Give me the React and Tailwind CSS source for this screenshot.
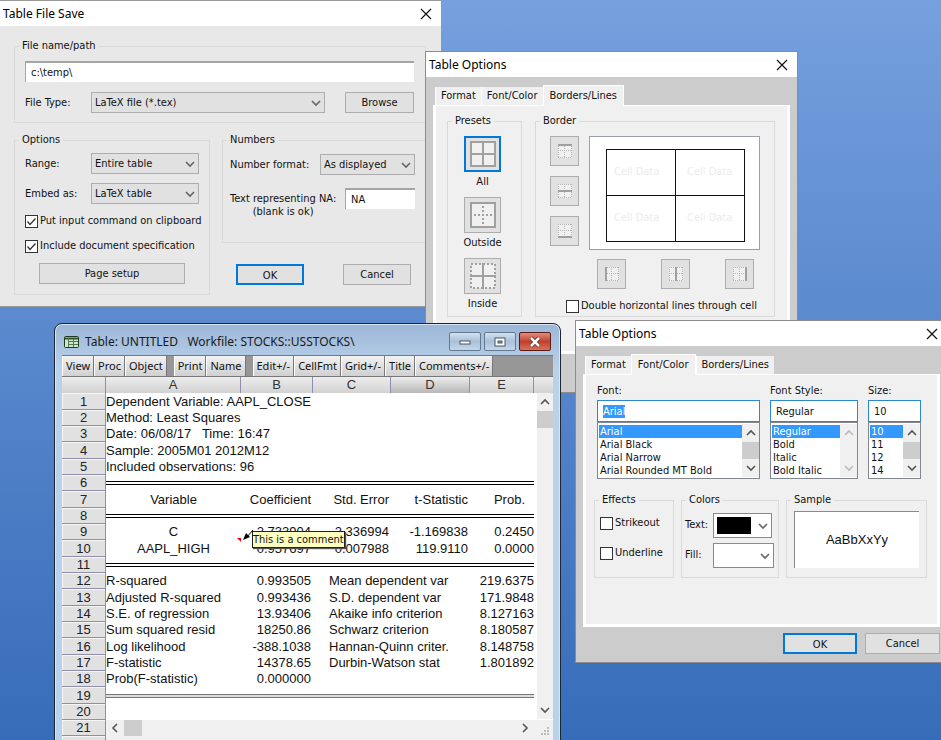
import React from "react";

const ROW_HEADER = "border-b border-r border-[#8f8db0] bg-[#e1e1e1] p-0 text-center text-[13px] leading-[15px] font-normal text-[#222] shadow-[inset_1px_1px_0_#f6f6f6]";
const COL_HEADER = "border-r border-[#8f8db0] bg-linear-to-b from-[#ededed] p-0 text-[13px] leading-4 font-normal text-[#333]";

const columns = [
  { name: "A", width: "w-[135px]" },
  { name: "B", width: "w-[72px]" },
  { name: "C", width: "w-[78px]" },
  { name: "D", width: "w-[79px]", current: true },
  { name: "E", width: "w-[64px]" },
];

const rows = [
  { type: "text", text: "Dependent Variable: AAPL_CLOSE" },
  { type: "text", text: "Method: Least Squares" },
  { type: "text", text: "Date: 06/08/17   Time: 16:47" },
  { type: "text", text: "Sample: 2005M01 2012M12" },
  { type: "text", text: "Included observations: 96" },
  { type: "line" },
  { type: "head", cells: ["Variable", "Coefficient", "Std. Error", "t-Statistic", "Prob."] },
  { type: "line" },
  { type: "coef", cells: ["C", "-2.733904", "2.336994", "-1.169838", "0.2450"] },
  { type: "coef", cells: ["AAPL_HIGH", "0.957697", "0.007988", "119.9110", "0.0000"], comment: "This is a comment" },
  { type: "line" },
  { type: "stat", cells: ["R-squared", "0.993505", "Mean dependent var", "219.6375"] },
  { type: "stat", cells: ["Adjusted R-squared", "0.993436", "S.D. dependent var", "171.9848"] },
  { type: "stat", cells: ["S.E. of regression", "13.93406", "Akaike info criterion", "8.127163"] },
  { type: "stat", cells: ["Sum squared resid", "18250.86", "Schwarz criterion", "8.180587"] },
  { type: "stat", cells: ["Log likelihood", "-388.1038", "Hannan-Quinn criter.", "8.148758"] },
  { type: "stat", cells: ["F-statistic", "14378.65", "Durbin-Watson stat", "1.801892"] },
  { type: "stat", cells: ["Prob(F-statistic)", "0.000000", "", ""] },
  { type: "line", light: true },
  { type: "text", text: "" },
];

const toolbar = [
  ["View", "Proc", "Object"],
  ["Print", "Name"],
  ["Edit+/-", "CellFmt", "Grid+/-", "Title", "Comments+/-"],
];

function Chevron({ dir = "down", className = "" }) {
  const points = {
    down: "1,3 5,7 9,3",
    up: "1,7 5,3 9,7",
    left: "7,1 3,5 7,9",
    right: "3,1 7,5 3,9",
  };
  return (
    <svg viewBox="0 0 10 10" className={`size-[10px] shrink-0 ${className}`} fill="none" stroke="currentColor">
      <polyline points={points[dir]} strokeWidth="1.6" />
    </svg>
  );
}

function TitleBar({ title }) {
  return (
    <header className="flex h-[25px] items-center justify-between bg-white pr-[9px] pl-[3px]">
      <h2 className="font-['Noto_Sans',sans-serif] text-[12px] leading-4 text-black">{title}</h2>
      <button type="button" aria-label="Close">
        <svg viewBox="0 0 12 12" className="size-[12px]" stroke="#111" strokeWidth="1.2">
          <path d="M1 1 11 11M11 1 1 11" />
        </svg>
      </button>
    </header>
  );
}

function Group({ title, className = "", children }) {
  return (
    <fieldset className={`min-w-0 border border-[#dadada] ${className}`}>
      <legend className="ml-[4px] px-[3px] leading-4">{title}</legend>
      {children}
    </fieldset>
  );
}

function Dropdown({ id, value, className = "" }) {
  return (
    <div className={`grid h-[21px] items-center ${className}`}>
      <select
        id={id}
        className="col-start-1 row-start-1 h-full w-full appearance-none border border-[#adadad] bg-[#e1e1e1] pt-[2px] pl-[3px] outline-none"
      >
        <option>{value}</option>
      </select>
      <Chevron className="pointer-events-none col-start-1 row-start-1 mr-1 justify-self-end text-[#666]" />
    </div>
  );
}

function PushButton({ primary, className = "", children }) {
  return (
    <button
      type="button"
      className={`h-[21px] bg-[#e1e1e1] pt-[2px] ${
        primary ? "border-2 border-[#0078d7]" : "border border-[#adadad]"
      } ${className}`}
    >
      {children}
    </button>
  );
}

function Checkbox({ label, checked = false }) {
  return (
    <label className="flex items-center gap-[2px] leading-4">
      <span className="grid size-[13px] shrink-0">
        <input
          type="checkbox"
          defaultChecked={checked}
          className="peer col-start-1 row-start-1 size-[13px] appearance-none border border-[#333] bg-white"
        />
        <svg
          viewBox="0 0 13 13"
          className="pointer-events-none invisible col-start-1 row-start-1 size-[13px] peer-checked:visible"
          fill="none"
          stroke="#333"
          strokeWidth="1.3"
        >
          <path d="M2.5 6.5 5 9.5 10.5 3.5" />
        </svg>
      </span>
      <span className="whitespace-nowrap">{label}</span>
    </label>
  );
}

function FileSaveDialog() {
  return (
    <section className="absolute top-0 left-0 w-[442px] border-y border-r border-[#999] bg-[#e8e8e8]">
      <TitleBar title="Table File Save" />
      <form className="pt-[12px] pr-[15px] pb-[11px] pl-[14px]">
        <Group title="File name/path" className="pb-[9px]">
          <div className="flex flex-col gap-[10px] pt-[7px] pr-[11px] pl-[10px]">
            <input
              aria-label="File name/path"
              defaultValue="c:\temp\"
              className="h-[21px] w-full border-t-2 border-l border-[#a5a5a5] bg-white pl-[5px] outline-none"
            />
            <div className="flex items-center">
              <label htmlFor="file-type" className="w-[66px] pt-[2px]">File Type:</label>
              <Dropdown id="file-type" value="LaTeX file (*.tex)" className="flex-1" />
              <PushButton className="ml-[20px] w-[69px]">Browse</PushButton>
            </div>
          </div>
        </Group>

        <div className="mt-[9px] flex items-start gap-[12px]">
          <Group title="Options" className="w-[196px] shrink-0">
            <div className="flex flex-col gap-[9px] px-[10px] pt-[5px]">
              <div className="flex items-center">
                <label htmlFor="range" className="w-[66px] pt-[2px]">Range:</label>
                <Dropdown id="range" value="Entire table" className="flex-1" />
              </div>
              <div className="flex items-center">
                <label htmlFor="embed" className="w-[66px] pt-[2px]">Embed as:</label>
                <Dropdown id="embed" value="LaTeX table" className="flex-1" />
              </div>
              <Checkbox label="Put input command on clipboard" checked />
              <Checkbox label="Include document specification" checked />
            </div>
            <div className="px-[24px] pt-[9px] pb-[10px]">
              <PushButton className="w-full">Page setup</PushButton>
            </div>
          </Group>

          <div className="flex-1">
            <Group title="Numbers">
              <div className="flex items-center justify-between pt-[6px] pr-[10px] pl-[7px]">
                <label htmlFor="number-format" className="pt-[2px]">Number format:</label>
                <Dropdown id="number-format" value="As displayed" className="w-[95px]" />
              </div>
              <div className="flex items-start justify-between pt-[13px] pr-[10px] pb-[24px] pl-[7px]">
                <label htmlFor="na-text" className="pt-[4px] text-center leading-[13px] whitespace-nowrap">
                  Text representing NA:
                  <br />
                  (blank is ok)
                </label>
                <input
                  id="na-text"
                  defaultValue="NA"
                  className="h-[21px] w-[70px] border-t-2 border-l border-[#a5a5a5] bg-white pl-[5px] outline-none"
                />
              </div>
            </Group>
            <div className="flex justify-between pt-[21px] pr-[15px] pl-[14px]">
              <PushButton primary className="w-[68px]">OK</PushButton>
              <PushButton className="w-[68px]">Cancel</PushButton>
            </div>
          </div>
        </div>
      </form>
    </section>
  );
}

function Tabs({ active }) {
  return (
    <div role="tablist" className="flex h-[21px] items-end">
      <div className="h-full w-[2px] border-b border-white" />
      {["Format", "Font/Color", "Borders/Lines"].map((tab) => (
        <button
          key={tab}
          type="button"
          role="tab"
          aria-selected={tab === active}
          className={
            tab === active
              ? "h-[21px] border-t border-x border-white bg-[#f0f0f0] px-[6px]"
              : "h-[19px] border-b border-l border-white bg-[#f0f0f0] px-[5px]"
          }
        >
          {tab}
        </button>
      ))}
      <div className="h-full flex-1 border-b border-white" />
    </div>
  );
}

const presetIcons = {
  All: (
    <g stroke="#a0a0a0" strokeWidth="2" fill="#f0f0f0">
      <rect x="1" y="1" width="24" height="24" />
      <path d="M13 1V25M1 13H25" />
    </g>
  ),
  Outside: (
    <g stroke="#a0a0a0" strokeWidth="2" fill="#f0f0f0">
      <rect x="1" y="1" width="24" height="24" />
      <path d="M13 4V23M4 13H23" strokeDasharray="2 2" />
    </g>
  ),
  Inside: (
    <g stroke="#a0a0a0" strokeWidth="2" fill="#f0f0f0">
      <rect x="1" y="1" width="24" height="24" strokeDasharray="2 2" />
      <path d="M13 0V26M0 13H26" />
    </g>
  ),
};

function PresetButton({ name, selected }) {
  return (
    <label className="flex flex-col items-center gap-[2px] leading-4">
      <button
        type="button"
        className={`grid h-[36px] w-[37px] place-items-center bg-[#e1e1e1] ${
          selected ? "border-2 border-[#0078d7]" : "border border-[#adadad]"
        }`}
      >
        <svg viewBox="0 0 26 26" className="size-[26px]" shapeRendering="crispEdges">
          {presetIcons[name]}
        </svg>
      </button>
      {name}
    </label>
  );
}

const edges = {
  top: "M0 1H14",
  middle: "M0 7H14",
  bottom: "M0 13H14",
  left: "M1 0V14",
  center: "M7 0V14",
  right: "M13 0V14",
};

function EdgeButton({ edge }) {
  return (
    <button
      type="button"
      aria-label={`${edge} border`}
      className="grid h-[30px] w-[29px] place-items-center border border-[#adadad] bg-[#e1e1e1]"
    >
      <svg viewBox="0 0 14 14" className="size-[14px]" shapeRendering="crispEdges">
        <rect width="14" height="14" fill="#f0f0f0" />
        <path
          d="M0 .5H14M0 6.5H14M0 13.5H14M.5 0V14M6.5 0V14M13.5 0V14"
          stroke="#b4b4b4"
          strokeDasharray="1 1"
        />
        <path d={edges[edge]} stroke="#a0a0a0" strokeWidth="2" />
      </svg>
    </button>
  );
}

function BordersDialog() {
  return (
    <section className="absolute top-[51px] left-[425px] w-[373px] border border-[#8c8c8c] bg-[#cccccc]">
      <TitleBar title="Table Options" />
      <div className="px-[7px] pt-[8px] pb-[38px]">
        <Tabs active="Borders/Lines" />
        <div className="flex items-start gap-[13px] border-x-[3px] border-b-[3px] border-white bg-[#f0f0f0] pt-[7px] pr-[12px] pb-[34px] pl-[11px]">
          <Group title="Presets" className="w-[75px] shrink-0">
            <div className="flex flex-col gap-[7px] pt-[7px] pr-[4px] pb-[4px]">
              <PresetButton name="All" selected />
              <PresetButton name="Outside" />
              <PresetButton name="Inside" />
            </div>
          </Group>
          <Group title="Border" className="flex-1">
            <div className="flex gap-[10px] pt-[7px] pr-[14px] pl-[14px]">
              <div className="flex flex-col gap-[10px]">
                <EdgeButton edge="top" />
                <EdgeButton edge="middle" />
                <EdgeButton edge="bottom" />
              </div>
              <div className="h-[114px] flex-1 border border-[#9a9faa] bg-white pt-[12px] pr-[14px] pl-[16px]">
                <table className="h-[93px] w-full table-fixed border-collapse whitespace-nowrap text-[#ececec]">
                  <tbody>
                    {[0, 1].map((row) => (
                      <tr key={row}>
                        <td className="border border-[#111] py-0 pr-0 pl-[7px]">Cell Data</td>
                        <td className="border border-[#111] py-0 pr-0 pl-[11px]">Cell Data</td>
                      </tr>
                    ))}
                  </tbody>
                </table>
              </div>
            </div>
            <div className="flex gap-[35px] pt-[9px] pl-[61px]">
              <EdgeButton edge="left" />
              <EdgeButton edge="center" />
              <EdgeButton edge="right" />
            </div>
            <div className="pt-[9px] pb-[2px] pl-[30px]">
              <Checkbox label="Double horizontal lines through cell" />
            </div>
          </Group>
        </div>
      </div>
    </section>
  );
}

function ListField({ id, label, value, options, disabledScroll, autoFocus, className }) {
  return (
    <div className={`flex flex-col ${className}`}>
      <label htmlFor={id} className="leading-[18px]">{label}</label>
      <input
        id={id}
        defaultValue={value}
        autoFocus={autoFocus}
        onFocus={(e) => e.target.select()}
        className="h-[22px] w-full border border-[#2a87d0] bg-white px-[5px] outline-none selection:bg-[#3399ff] selection:text-white"
      />
      <div className="flex h-[57px] border border-[#828790] bg-white py-px pl-px">
        <select
          size={4}
          aria-label={label}
          defaultValue={value}
          className="min-w-0 flex-1 appearance-none overflow-hidden bg-white pt-px outline-none"
        >
          {options.map((option) => (
            <option
              key={option}
              className="h-[13px] min-h-0 p-0 pl-px leading-[13px] checked:bg-[linear-gradient(#3399ff,#3399ff)] checked:text-white"
            >
              {option}
            </option>
          ))}
        </select>
        <div
          className={`flex w-[17px] flex-col items-center justify-between bg-[#f0f0f0] py-[4px] ${
            disabledScroll ? "text-[#bbb]" : "text-[#555]"
          }`}
        >
          <Chevron dir="up" />
          {!disabledScroll && <div className="h-[17px] w-full bg-[#cdcdcd]" />}
          <Chevron dir="down" />
        </div>
      </div>
    </div>
  );
}

function ColorField({ id, label, color, className }) {
  return (
    <div className="flex items-center">
      <label htmlFor={id} className="w-[28px]">{label}</label>
      <div className={`grid h-[25px] items-center ${className}`}>
        <select
          id={id}
          className="col-start-1 row-start-1 h-full w-full appearance-none border border-[#8a8a8a] bg-white outline-none"
        />
        {color && <span className={`pointer-events-none col-start-1 row-start-1 ml-1 h-[17px] w-[34px] ${color}`} />}
        <Chevron className="pointer-events-none col-start-1 row-start-1 mr-1 justify-self-end text-[#666]" />
      </div>
    </div>
  );
}

function FontDialog() {
  return (
    <section className="absolute top-[320px] left-[575px] w-[373px] border border-[#8c8c8c] bg-[#cccccc]">
      <TitleBar title="Table Options" />
      <div className="px-[7px] pt-[8px] pb-[8px]">
        <Tabs active="Font/Color" />
        <div className="border-x-[3px] border-b-[3px] border-white bg-[#f0f0f0] pt-[7px] pb-[46px]">
          <div className="flex gap-[10px] px-[11px]">
            <ListField
              id="font"
              label="Font:"
              value="Arial"
              options={["Arial", "Arial Black", "Arial Narrow", "Arial Rounded MT Bold"]}
              autoFocus
              className="w-[163px]"
            />
            <ListField
              id="font-style"
              label="Font Style:"
              value="Regular"
              options={["Regular", "Bold", "Italic", "Bold Italic"]}
              disabledScroll
              className="w-[88px]"
            />
            <ListField id="size" label="Size:" value="10" options={["10", "11", "12", "14"]} className="w-[53px]" />
          </div>
          <div className="flex gap-[7px] px-[8px] pt-[13px]">
            <Group title="Effects" className="w-[80px]">
              <div className="flex flex-col gap-[14px] pt-[7px] pl-[5px]">
                <Checkbox label="Strikeout" />
                <Checkbox label="Underline" />
              </div>
            </Group>
            <Group title="Colors" className="w-[98px]">
              <div className="flex flex-col gap-[5px] pt-[5px] pb-[9px] pl-[3px]">
                <ColorField id="text-color" label="Text:" color="bg-black" className="w-[59px]" />
                <ColorField id="fill-color" label="Fill:" className="w-[61px]" />
              </div>
            </Group>
            <Group title="Sample" className="w-[141px]">
              <div className="mx-[7px] mt-[3px] grid h-[57px] place-items-center border-t border-l border-[#8a8a8a] bg-white font-['Liberation_Sans',sans-serif] text-[13px]">
                AaBbXxYy
              </div>
            </Group>
          </div>
        </div>
        <div className="flex justify-end gap-[8px] pt-[6px]">
          <PushButton primary className="w-[74px]">OK</PushButton>
          <PushButton className="w-[75px]">Cancel</PushButton>
        </div>
      </div>
    </section>
  );
}

function DoubleRule({ light }) {
  return <div className={`h-[4px] border-y ${light ? "border-[#777] bg-[#ddd]" : "border-black"}`} />;
}

function Comment({ text }) {
  return (
    <>
      <svg viewBox="0 0 18 14" className="absolute -top-[11px] -left-[4px] h-[14px] w-[18px]">
        <path d="M0 9H4V13Z" fill="#e00" />
        <path d="M16 1 10 8" stroke="#000" />
        <path d="M6 11 13 8 9 4Z" fill="#000" />
      </svg>
      <span className="absolute -top-[9px] left-[11px] border border-[#222] bg-[#ffffc0] font-['DejaVu_Sans_Condensed',sans-serif] text-[11px] leading-[15px] whitespace-nowrap shadow-[1px_1px_1px_#555]">
        {text}
      </span>
    </>
  );
}

function RowCells({ row }) {
  if (row.type === "text") {
    return <td colSpan={5} className="p-0 whitespace-pre">{row.text}</td>;
  }
  if (row.type === "line") {
    return <td colSpan={5} className="p-0"><DoubleRule light={row.light} /></td>;
  }
  if (row.type === "stat") {
    return (
      <>
        <td className="p-0">{row.cells[0]}</td>
        <td className="p-0 pr-[2px] text-right">{row.cells[1]}</td>
        <td colSpan={2} className="p-0 pl-[16px]">{row.cells[2]}</td>
        <td className="p-0 text-right">{row.cells[3]}</td>
      </>
    );
  }
  return row.cells.map((cell, i) => (
    <td
      key={cell}
      className={`p-0 ${i === 0 ? "text-center" : "text-right"} ${
        i > 0 && i < 4 ? "pr-[2px]" : ""
      } ${i === 4 && row.type === "head" ? "pr-[9px]" : ""} ${i === 1 && row.comment ? "relative" : ""}`}
    >
      {cell}
      {i === 1 && row.comment && <Comment text={row.comment} />}
    </td>
  ));
}

function Spreadsheet() {
  return (
    <table className="w-full table-fixed border-separate border-spacing-0 bg-white font-['Liberation_Sans',sans-serif] text-[13px] leading-4 text-[#111]">
      <thead>
        <tr>
          <th className={`w-[44px] to-[#d2d2d2] ${COL_HEADER}`} />
          {columns.map((col) => (
            <th
              key={col.name}
              className={`${col.width} ${COL_HEADER} ${col.current ? "to-[#b8b8b8]" : "to-[#d2d2d2]"}`}
            >
              {col.name}
            </th>
          ))}
          <th className="bg-linear-to-b from-[#ededed] to-[#d2d2d2]" />
        </tr>
      </thead>
      <tbody>
        {rows.map((row, i) => (
          <tr key={i} className={i % 3 === 0 ? "h-[17px]" : "h-[16px]"}>
            <th className={ROW_HEADER}>{i + 1}</th>
            <RowCells row={row} />
            {i === 0 && (
              <td rowSpan={20} className="p-0 pl-[3px] align-top">
                <div className="flex h-[326px] flex-col items-center justify-between bg-[#f0f0f0] pt-1 pb-1 text-[#555]">
                  <div className="flex w-full flex-col items-center gap-1">
                    <Chevron dir="up" />
                    <div className="h-[17px] w-full bg-[#cdcdcd]" />
                  </div>
                  <Chevron dir="down" />
                </div>
              </td>
            )}
          </tr>
        ))}
        <tr>
          <th className={ROW_HEADER}>21</th>
          <td colSpan={5} className="bg-[#f0f0f0] p-0">
            <div className="flex h-4 items-center justify-between px-1 text-[#555]">
              <div className="flex h-full items-center gap-1">
                <Chevron dir="left" />
                <div className="h-full w-[18px] bg-[#cdcdcd]" />
              </div>
              <Chevron dir="right" />
            </div>
          </td>
          <td className="bg-[#f0f0f0] p-0 pr-[3px] align-bottom">
            <svg viewBox="0 0 9 9" className="ml-auto size-[9px]" fill="#bbb">
              <path d="M6 0h2v2H6zM3 3h2v2H3zM6 3h2v2H6zM0 6h2v2H0zM3 6h2v2H3zM6 6h2v2H6z" />
            </svg>
          </td>
        </tr>
        <tr className="h-[16px]">
          <th className={ROW_HEADER} />
          <td colSpan={6} className="bg-[#f0f0f0]" />
        </tr>
      </tbody>
    </table>
  );
}

function CaptionButton({ label, danger, children }) {
  return (
    <button
      type="button"
      aria-label={label}
      className={`grid h-[19px] w-[32px] place-items-center rounded-xs border ${
        danger
          ? "border-[#5d1a12] bg-linear-to-b from-[#dd8d80] via-[#c0402c] to-[#d8705c]"
          : "border-[#64788f] bg-linear-to-b from-[#d3e1f0] via-[#a9c0d8] to-[#c3d8ee]"
      }`}
    >
      <svg viewBox="0 0 14 12" className="h-[12px] w-[14px]" fill="none" stroke="#4a5460">
        {children}
      </svg>
    </button>
  );
}

function TableWindow() {
  return (
    <section className="absolute top-[323px] left-[54px] w-[507px] rounded-t-lg border border-[#1c2733] bg-linear-to-b from-[#9cb7d6] to-[#b9d1ea] to-10% px-[7px] pb-2 shadow-[inset_0_0_0_1px_#d6e6f5]">
      <header className="flex h-[31px] items-center pt-[4px] pr-[2px]">
        <svg viewBox="0 0 15 12" className="mr-[6px] ml-[2px] h-[12px] w-[15px]">
          <rect x=".5" y=".5" width="14" height="11" rx="1" fill="#cfe6c8" stroke="#1d3a20" />
          <path d="M1 2.5H14" stroke="#2c5430" strokeWidth="2" />
          <path d="M4.5 2V11M9.5 3V11M5 5.5H14M5 8.5H14" stroke="#4d7a52" />
        </svg>
        <h2 className="flex-1 font-['Noto_Sans',sans-serif] text-[12px] whitespace-pre text-[#1a1a1a]">
          {"Table: UNTITLED   Workfile: STOCKS::USSTOCKS\\"}
        </h2>
        <div className="flex gap-[3px]">
          <CaptionButton label="Minimize">
            <rect x="2" y="5" width="10" height="3" fill="#fff" />
          </CaptionButton>
          <CaptionButton label="Maximize">
            <rect x="2" y="2" width="10" height="8" fill="#fff" />
            <rect x="5" y="5" width="4" height="2" fill="#8ea6c0" />
          </CaptionButton>
          <CaptionButton label="Close window" danger>
            <path d="M3 2 11 10M11 2 3 10" strokeWidth="4" stroke="#5a2a24" />
            <path d="M3 2 11 10M11 2 3 10" strokeWidth="2.5" stroke="#fff" />
          </CaptionButton>
        </div>
      </header>
      <div className="flex h-[22px] gap-[7px] border-y border-[#777] bg-[#979797]">
        {toolbar.map((group) => (
          <div key={group[0]} className="flex">
            {group.map((item) => (
              <button
                key={item}
                type="button"
                className="border-r border-l border-r-[#777] border-l-white bg-linear-to-b from-[#f2f2f2] to-[#d0d0d0] px-[3px] font-['Noto_Sans',sans-serif] text-[11px] text-[#111]"
              >
                {item}
              </button>
            ))}
          </div>
        ))}
      </div>
      <Spreadsheet />
    </section>
  );
}

function App() {
  return (
    <main className="relative h-screen min-h-[740px] w-full overflow-hidden bg-linear-to-b from-[#76a0de] to-[#366cb9] font-['DejaVu_Sans_Condensed','Noto_Sans',sans-serif] text-[11px] text-[#111]">
      <FileSaveDialog />
      <BordersDialog />
      <TableWindow />
      <FontDialog />
    </main>
  );
}

export default App;
